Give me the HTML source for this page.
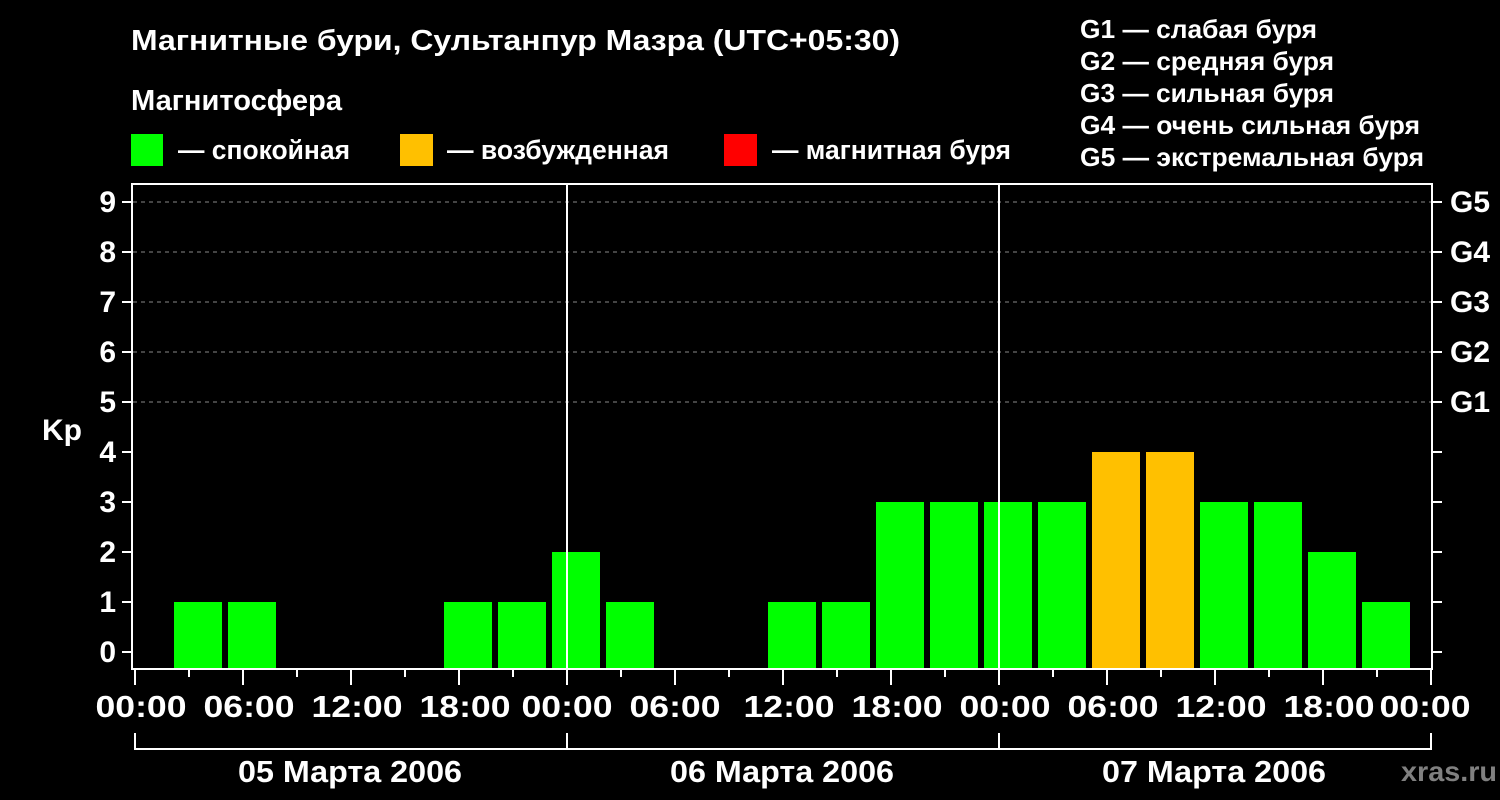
<!DOCTYPE html>
<html><head><meta charset="utf-8"><style>
html,body{margin:0;padding:0;background:#000;}
svg{display:block;font-family:"Liberation Sans",Arial,sans-serif;font-weight:bold;}
</style></head><body>
<svg width="1500" height="800" viewBox="0 0 1500 800" xmlns="http://www.w3.org/2000/svg">
<rect width="1500" height="800" fill="#000"/>
<g fill="#fff" font-size="29" lengthAdjust="spacingAndGlyphs">
<text x="131" y="50" textLength="769" lengthAdjust="spacingAndGlyphs">Магнитные бури, Сультанпур Мазра (UTC+05:30)</text>
<text x="131" y="110" textLength="211" lengthAdjust="spacingAndGlyphs">Магнитосфера</text>
<text x="178" y="159" font-size="27" textLength="172" lengthAdjust="spacingAndGlyphs">— спокойная</text>
<text x="447" y="159" font-size="27" textLength="222" lengthAdjust="spacingAndGlyphs">— возбужденная</text>
<text x="772" y="159" font-size="27" textLength="239" lengthAdjust="spacingAndGlyphs">— магнитная буря</text>
</g>
<g fill="#fff" font-size="26">
<text x="1080" y="38" textLength="237" lengthAdjust="spacingAndGlyphs">G1 — слабая буря</text>
<text x="1080" y="70" textLength="254" lengthAdjust="spacingAndGlyphs">G2 — средняя буря</text>
<text x="1080" y="102" textLength="254" lengthAdjust="spacingAndGlyphs">G3 — сильная буря</text>
<text x="1080" y="134" textLength="340" lengthAdjust="spacingAndGlyphs">G4 — очень сильная буря</text>
<text x="1080" y="166" textLength="344" lengthAdjust="spacingAndGlyphs">G5 — экстремальная буря</text>
</g>
<rect x="131" y="134" width="32" height="32" fill="#00ff00"/>
<rect x="400" y="134" width="33" height="32" fill="#ffc000"/>
<rect x="724" y="134" width="33" height="32" fill="#ff0000"/>

<g stroke="#888" stroke-width="1" stroke-dasharray="4,4">
<line x1="133" y1="202" x2="1431" y2="202"/>
<line x1="133" y1="252" x2="1431" y2="252"/>
<line x1="133" y1="302" x2="1431" y2="302"/>
<line x1="133" y1="352" x2="1431" y2="352"/>
<line x1="133" y1="402" x2="1431" y2="402"/>
</g>
<g fill="#00ff00">
<rect x="174" y="602" width="48" height="66"/>
<rect x="228" y="602" width="48" height="66"/>
<rect x="444" y="602" width="48" height="66"/>
<rect x="498" y="602" width="48" height="66"/>
<rect x="552" y="552" width="48" height="116"/>
<rect x="606" y="602" width="48" height="66"/>
<rect x="768" y="602" width="48" height="66"/>
<rect x="822" y="602" width="48" height="66"/>
<rect x="876" y="502" width="48" height="166"/>
<rect x="930" y="502" width="48" height="166"/>
<rect x="984" y="502" width="48" height="166"/>
<rect x="1038" y="502" width="48" height="166"/>
<rect x="1200" y="502" width="48" height="166"/>
<rect x="1254" y="502" width="48" height="166"/>
<rect x="1308" y="552" width="48" height="116"/>
<rect x="1362" y="602" width="48" height="66"/>
</g>
<g fill="#ffc000">
<rect x="1092" y="452" width="48" height="216"/>
<rect x="1146" y="452" width="48" height="216"/>
</g>
<g stroke="#fff" stroke-width="2">
<line x1="567" y1="183" x2="567" y2="668"/>
<line x1="999" y1="183" x2="999" y2="668"/>
</g>
<rect x="132" y="184" width="1300" height="485" fill="none" stroke="#fff" stroke-width="2"/>
<g stroke="#fff" stroke-width="2">
<line x1="122" y1="202" x2="131" y2="202"/><line x1="122" y1="252" x2="131" y2="252"/>
<line x1="122" y1="302" x2="131" y2="302"/><line x1="122" y1="352" x2="131" y2="352"/>
<line x1="122" y1="402" x2="131" y2="402"/><line x1="122" y1="452" x2="131" y2="452"/>
<line x1="122" y1="502" x2="131" y2="502"/><line x1="122" y1="552" x2="131" y2="552"/>
<line x1="122" y1="602" x2="131" y2="602"/><line x1="122" y1="652" x2="131" y2="652"/>
<line x1="1433" y1="202" x2="1442" y2="202"/><line x1="1433" y1="252" x2="1442" y2="252"/>
<line x1="1433" y1="302" x2="1442" y2="302"/><line x1="1433" y1="352" x2="1442" y2="352"/>
<line x1="1433" y1="402" x2="1442" y2="402"/><line x1="1433" y1="452" x2="1442" y2="452"/>
<line x1="1433" y1="502" x2="1442" y2="502"/><line x1="1433" y1="552" x2="1442" y2="552"/>
<line x1="1433" y1="602" x2="1442" y2="602"/><line x1="1433" y1="652" x2="1442" y2="652"/>
</g>
<g fill="#fff" font-size="30" text-anchor="end">
<text x="116" y="212">9</text><text x="116" y="262">8</text><text x="116" y="312">7</text>
<text x="116" y="362">6</text><text x="116" y="412">5</text><text x="116" y="462">4</text>
<text x="116" y="512">3</text><text x="116" y="562">2</text><text x="116" y="612">1</text>
<text x="116" y="662">0</text>
</g>
<text x="42" y="440" fill="#fff" font-size="30">Kp</text>
<g fill="#fff" font-size="30">
<text x="1450" y="212">G5</text><text x="1450" y="262">G4</text><text x="1450" y="312">G3</text>
<text x="1450" y="362">G2</text><text x="1450" y="412">G1</text>
</g>
<g stroke="#fff" stroke-width="2">
<line x1="135" y1="670" x2="135" y2="685"/><line x1="189" y1="670" x2="189" y2="677"/>
<line x1="243" y1="670" x2="243" y2="685"/><line x1="297" y1="670" x2="297" y2="677"/>
<line x1="351" y1="670" x2="351" y2="685"/><line x1="405" y1="670" x2="405" y2="677"/>
<line x1="459" y1="670" x2="459" y2="685"/><line x1="513" y1="670" x2="513" y2="677"/>
<line x1="567" y1="670" x2="567" y2="685"/><line x1="621" y1="670" x2="621" y2="677"/>
<line x1="675" y1="670" x2="675" y2="685"/><line x1="729" y1="670" x2="729" y2="677"/>
<line x1="783" y1="670" x2="783" y2="685"/><line x1="837" y1="670" x2="837" y2="677"/>
<line x1="891" y1="670" x2="891" y2="685"/><line x1="945" y1="670" x2="945" y2="677"/>
<line x1="999" y1="670" x2="999" y2="685"/><line x1="1053" y1="670" x2="1053" y2="677"/>
<line x1="1107" y1="670" x2="1107" y2="685"/><line x1="1161" y1="670" x2="1161" y2="677"/>
<line x1="1215" y1="670" x2="1215" y2="685"/><line x1="1269" y1="670" x2="1269" y2="677"/>
<line x1="1323" y1="670" x2="1323" y2="685"/><line x1="1377" y1="670" x2="1377" y2="677"/>
<line x1="1431" y1="670" x2="1431" y2="685"/>
</g>
<g fill="#fff" font-size="31" text-anchor="middle">
<text x="141" y="717" textLength="91" lengthAdjust="spacingAndGlyphs">00:00</text>
<text x="249" y="717" textLength="91" lengthAdjust="spacingAndGlyphs">06:00</text>
<text x="357" y="717" textLength="91" lengthAdjust="spacingAndGlyphs">12:00</text>
<text x="465" y="717" textLength="91" lengthAdjust="spacingAndGlyphs">18:00</text>
<text x="567" y="717" textLength="91" lengthAdjust="spacingAndGlyphs">00:00</text>
<text x="675" y="717" textLength="91" lengthAdjust="spacingAndGlyphs">06:00</text>
<text x="789" y="717" textLength="91" lengthAdjust="spacingAndGlyphs">12:00</text>
<text x="897" y="717" textLength="91" lengthAdjust="spacingAndGlyphs">18:00</text>
<text x="1005" y="717" textLength="91" lengthAdjust="spacingAndGlyphs">00:00</text>
<text x="1113" y="717" textLength="91" lengthAdjust="spacingAndGlyphs">06:00</text>
<text x="1221" y="717" textLength="91" lengthAdjust="spacingAndGlyphs">12:00</text>
<text x="1329" y="717" textLength="91" lengthAdjust="spacingAndGlyphs">18:00</text>
<text x="1425" y="717" textLength="91" lengthAdjust="spacingAndGlyphs">00:00</text>
</g>
<g stroke="#fff" stroke-width="2" fill="none">
<polyline points="135,733 135,749 1431,749 1431,733"/>
<line x1="567" y1="733" x2="567" y2="749"/>
<line x1="999" y1="733" x2="999" y2="749"/>
</g>
<g fill="#fff" font-size="31" text-anchor="middle">
<text x="350" y="782" textLength="224" lengthAdjust="spacingAndGlyphs">05 Марта 2006</text>
<text x="782" y="782" textLength="224" lengthAdjust="spacingAndGlyphs">06 Марта 2006</text>
<text x="1214" y="782" textLength="224" lengthAdjust="spacingAndGlyphs">07 Марта 2006</text>
</g>
<text x="1401" y="781" fill="#808080" font-size="28" textLength="96" lengthAdjust="spacingAndGlyphs">xras.ru</text>
</svg>
</body></html>
